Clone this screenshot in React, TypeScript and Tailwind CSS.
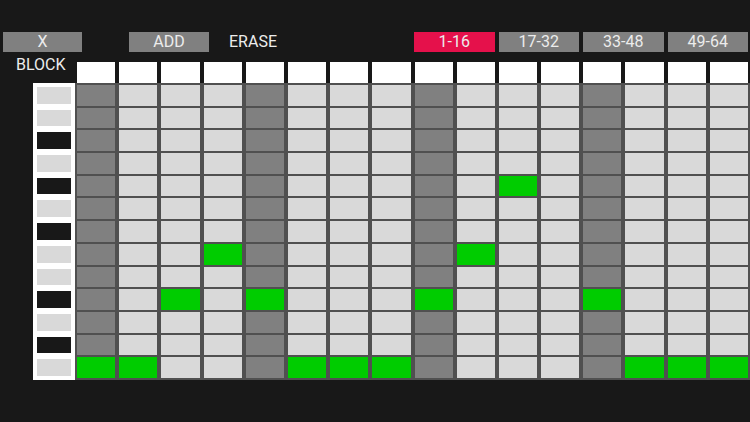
import React from "react";

const ROWS = 13;
const COLS = 16;

// green steps per row
const GREENS: Record<number, number[]> = {
  4: [10],
  7: [3, 9],
  9: [2, 4, 8, 12],
  12: [0, 1, 5, 6, 7, 13, 14, 15],
};

// dark keys in the block column
const BLOCK_DARK = [2, 4, 6, 9, 11];

const PAGES = ["1-16", "17-32", "33-48", "49-64"];

function cellColor(row: number, col: number) {
  if (GREENS[row]?.includes(col)) return "bg-[#00cc00]";
  if (col % 4 === 0) return "bg-[#808080]";
  return "bg-[#d9d9d9]";
}

export default function App() {
  const cells = [];
  for (let r = 0; r < ROWS; r++) {
    for (let c = 0; c < COLS; c++) {
      cells.push(<div key={`${r}-${c}`} className={cellColor(r, c)} />);
    }
  }

  return (
    <div
      className="h-[422px] w-[750px] overflow-hidden bg-[#181818] text-[16px] text-[#ececec]"
      style={{ fontFamily: "Roboto, 'Liberation Sans', sans-serif" }}
    >
      {/* top buttons */}
      <div className="flex h-[20px] pt-0 mt-[32px] leading-[20px]">
        <button className="ml-[3px] w-[79px] bg-[#808080] text-center">X</button>
        <button className="ml-[47px] w-[80px] bg-[#808080] text-center">ADD</button>
        <button className="ml-[4px] w-[80px] text-center">ERASE</button>
        <div className="ml-auto flex w-[336px] gap-[4px] pr-[2px]">
          {PAGES.map((p, i) => (
            <button
              key={p}
              className={`flex-1 text-center ${i === 0 ? "bg-[#e5114b]" : "bg-[#808080]"}`}
            >
              {p}
            </button>
          ))}
        </div>
      </div>

      {/* header row */}
      <div className="flex h-[31px]">
        <div className="w-[75px] pl-[16px] pt-[3px] leading-[20px]">BLOCK</div>
        <div className="grid flex-1 grid-cols-16 gap-x-[4px] px-[2px] pt-[10px]">
          {Array.from({ length: COLS }, (_, i) => (
            <div key={i} className="h-[21px] bg-white" />
          ))}
        </div>
      </div>

      {/* block column + step grid */}
      <div className="flex h-[297px]">
        <div className="ml-[33px] grid w-[42px] grid-rows-13 gap-y-[2px] bg-white py-[2px]">
          {Array.from({ length: ROWS }, (_, r) => (
            <div key={r} className="px-[4px] py-[2px]">
              <div
                className={`h-full ${BLOCK_DARK.includes(r) ? "bg-[#181818]" : "bg-[#d9d9d9]"}`}
              />
            </div>
          ))}
        </div>
        <div className="grid flex-1 grid-cols-16 grid-rows-13 gap-x-[4px] gap-y-[2px] bg-[#505050] p-[2px]">
          {cells}
        </div>
      </div>
    </div>
  );
}
